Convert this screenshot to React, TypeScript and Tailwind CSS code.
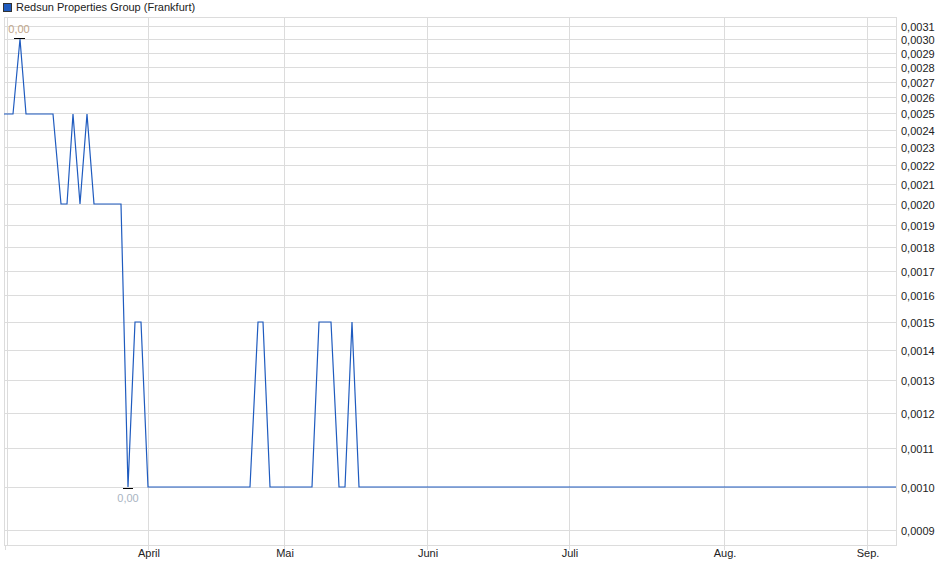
export default function App() {
  const yOf = (v: number) => 487 - 407.8 * Math.log(v / 0.001);
  const labels = [31, 30, 29, 28, 27, 26, 25, 24, 23, 22, 21, 20, 19, 18, 17, 16, 15, 14, 13, 12, 11, 10, 9];
  const vx = [148, 284, 427, 569, 724, 867];
  const months = ["April", "Mai", "Juni", "Juli", "Aug.", "Sep."];
  const pts: [number, number][] = [
    [4, 114], [13, 114], [20, 39], [26, 114], [53, 114], [61, 204], [67, 204], [73, 114], [80, 204], [87, 114], [94, 204],
    [121, 204], [128, 487], [135, 322], [141, 322], [148, 487], [250, 487], [258, 322], [263, 322], [270, 487], [312, 487],
    [319, 322], [331, 322], [339, 487], [345, 487], [352, 322], [359, 487], [896, 487],
  ];
  return (
    <div className="w-[940px] h-[579px] bg-white relative" style={{ fontFamily: '"Liberation Sans", Arial, sans-serif' }}>
      <div className="flex items-center gap-1 pl-[3px] pt-[1px] text-[11px] text-[#222] h-[14px]">
        <div className="w-[9px] h-[9px] bg-[#1f5bbf] border border-[#333]" />
        <span>Redsun Properties Group (Frankfurt)</span>
      </div>
      <svg className="absolute left-0 top-0" width="940" height="579">
        <rect x="4.5" y="17.5" width="892" height="528" fill="none" stroke="#dcdcdc" />
        <line x1="7.5" y1="17" x2="7.5" y2="546" stroke="#dcdcdc" />
        {labels.map((l) => {
          const y = Math.round(yOf(l / 10000)) + 0.5;
          return (
            <g key={l}>
              <line x1="4" x2="896" y1={y} y2={y} stroke="#dcdcdc" />
              <text x="901" y={y + 4} fontSize="11" fill="#222">{"0,00" + String(l).padStart(2, "0")}</text>
            </g>
          );
        })}
        {vx.map((x, i) => (
          <g key={x}>
            <line x1={x + 0.5} x2={x + 0.5} y1="17" y2="550" stroke="#dcdcdc" />
            <text x={x + 1} y="557" fontSize="11" fill="#222" textAnchor="middle">{months[i]}</text>
          </g>
        ))}
        <line x1="5.5" x2="5.5" y1="546" y2="550" stroke="#dcdcdc" />
        <polyline points={pts.map((p) => p.join(",")).join(" ")} fill="none" stroke="#1f5bbf" strokeWidth="1.2" />
        <line x1="14" x2="25" y1="38.5" y2="38.5" stroke="#000" />
        <line x1="123" x2="133" y1="488.5" y2="488.5" stroke="#000" />
        <text x="19" y="33" fontSize="11" fill="#c0a58a" textAnchor="middle">0,00</text>
        <text x="128" y="502" fontSize="11" fill="#a9b4c2" textAnchor="middle">0,00</text>
      </svg>
    </div>
  );
}
